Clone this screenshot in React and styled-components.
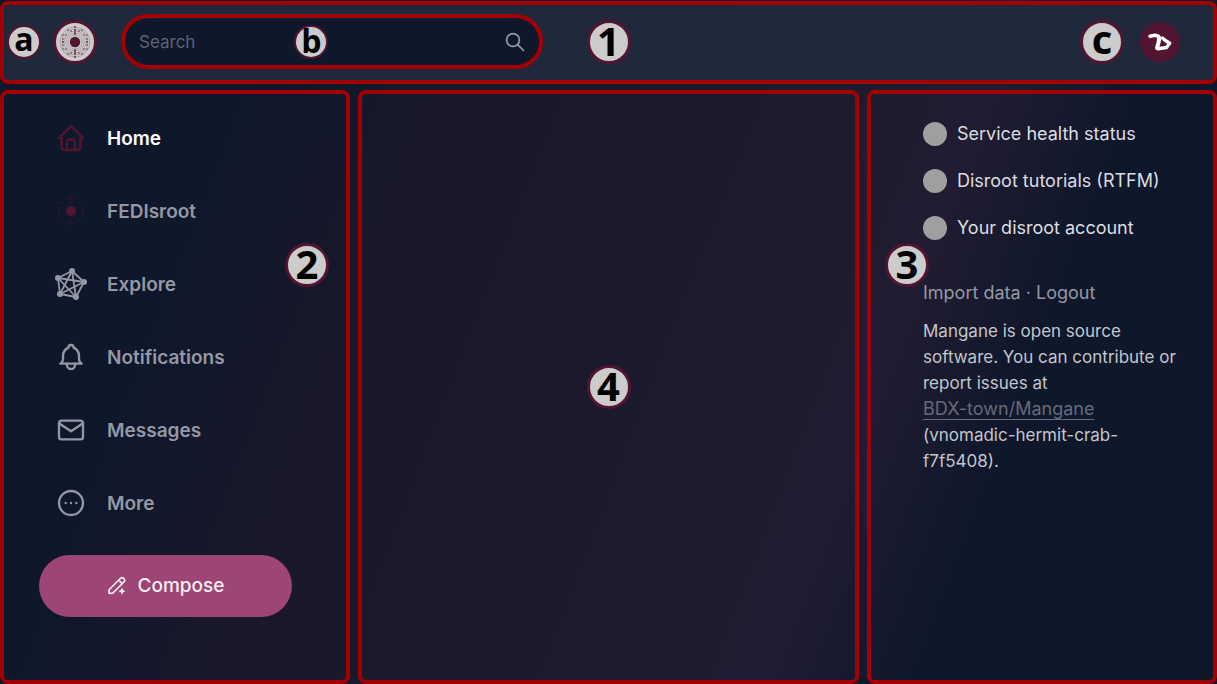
import React from "react";
import styled, { createGlobalStyle } from "styled-components";

const RED = "#a30005";
const WINE = "#53152f";
const MUTED = "#9498a4";

const GlobalStyle = createGlobalStyle`
  *, *::before, *::after { box-sizing: border-box; }
  body {
    margin: 0;
    font-family: Inter, "Liberation Sans", sans-serif;
    background: #0f172a;
  }
`;

const Page = styled.div`
  display: flex;
  flex-direction: column;
  gap: 6px;
  min-height: 100vh;
  padding-top: 1px;
  background: linear-gradient(111deg, #0f172a 0%, #0f172a 19%, #18182a 31%, #1b1a2d 50%, #1e1b2f 62%, #211c31 69%, #0f172a 79%, #0f172a 100%);
`;

const Header = styled.header`
  position: relative;
  display: flex;
  align-items: center;
  height: 83px;
  padding: 0 33px 2px 3px;
  border: 4px solid ${RED};
  border-radius: 8px;
  background: #1f293b;
`;

const Badge = styled.span`
  display: flex;
  align-items: center;
  justify-content: center;
  flex: none;
  width: ${(p) => (p.$small ? 34 : 44)}px;
  height: ${(p) => (p.$small ? 34 : 44)}px;
  padding-bottom: ${(p) => (p.$short ? 6 : 2)}px;
  border: ${(p) => (p.$small ? 2 : 3)}px solid ${WINE};
  border-radius: 50%;
  background: #cccccc;
  color: #000;
  font: 700 ${(p) => (p.$small ? 32 : 40)}px/1 "Open Sans", sans-serif;
`;

const FloatingBadge = styled(Badge)`
  position: absolute;
  left: ${(p) => p.$left};
  top: ${(p) => p.$top};
  transform: translate(-50%, -50%);
  pointer-events: none;
`;

const LogoLink = styled.a`
  flex: none;
  display: block;
  width: 44px;
  height: 44px;
  margin: 0 24px 0 12px;
`;

const SearchForm = styled.form`
  position: relative;
  display: flex;
  align-items: center;
  flex: 0 1 422px;
  min-width: 160px;
  height: 55px;
  padding: 0 12px 0 14px;
  border: 4px solid ${RED};
  border-radius: 28px;
  background: #0f172a;
`;

const SearchInput = styled.input`
  flex: 1;
  min-width: 0;
  padding: 0;
  border: 0;
  outline: 0;
  background: transparent;
  color: #e5e7eb;
  font: 400 17px/24px Inter, sans-serif;
  &::placeholder { color: #5d6473; opacity: 1; }
`;

const IconButton = styled.button`
  display: flex;
  flex: none;
  padding: 0;
  border: 0;
  background: none;
  color: ${MUTED};
`;

const Account = styled.div`
  display: flex;
  align-items: center;
  gap: 16px;
  margin-left: auto;
`;

const Columns = styled.div`
  flex: 1;
  display: grid;
  grid-template-columns: minmax(0, 350fr) minmax(0, 501fr) minmax(0, 350fr);
  gap: 8px;
`;

const Panel = styled.div`
  position: relative;
  border: 4px solid ${RED};
  border-radius: 8px;
`;

const SidePanel = styled(Panel)`
  padding: 28px 54px 28px 35px;
`;

const InfoPanel = styled(Panel)`
  padding: 28px 36px 28px 52px;
`;

const NavList = styled.nav`
  display: flex;
  flex-direction: column;
  gap: 41px;
  padding-left: 16px;
`;

const NavLink = styled.a`
  display: flex;
  align-items: center;
  gap: 20px;
  height: 32px;
  color: ${(p) => (p.$active ? "#ffffff" : MUTED)};
  font-size: 19px;
  font-weight: 600;
  text-decoration: none;
  svg { flex: none; color: ${(p) => (p.$wine ? WINE : MUTED)}; }
`;

const ComposeButton = styled.button`
  display: flex;
  align-items: center;
  justify-content: center;
  gap: 11px;
  width: 100%;
  height: 62px;
  margin-top: 36px;
  border: 0;
  border-radius: 31px;
  background: #9d4574;
  color: #f7eef3;
  font: 500 19px/26px Inter, sans-serif;
`;

const Promos = styled.div`
  display: flex;
  flex-direction: column;
  gap: 23px;
`;

const PromoLink = styled.a`
  display: flex;
  align-items: center;
  gap: 10px;
  height: 24px;
  color: #dcdde1;
  font-size: 18px;
  line-height: 26px;
  text-decoration: none;
  white-space: nowrap;
  &::before {
    content: "";
    flex: none;
    width: 24px;
    height: 24px;
    border-radius: 50%;
    background: #9f9f9f;
  }
`;

const FooterLinks = styled.div`
  margin-top: 40px;
  color: ${MUTED};
  font-size: 18px;
  line-height: 26px;
  a { color: inherit; text-decoration: none; }
`;

const About = styled.p`
  margin: 12px 0 0;
  color: #c3c6cc;
  font-size: 17px;
  line-height: 26px;
`;

const SourceLink = styled.a`
  color: #656b79;
  text-decoration: underline;
  text-underline-offset: 4px;
  text-decoration-thickness: 1px;
  font-size: 18px;
  white-space: nowrap;
`;

function LineIcon({ size = 32, stroke = 1.75, children }) {
  return (
    <svg width={size} height={size} viewBox="0 0 24 24" fill="none" stroke="currentColor"
      strokeWidth={stroke} strokeLinecap="round" strokeLinejoin="round" aria-hidden="true">
      {children}
    </svg>
  );
}

const HomeIcon = () => (
  <LineIcon>
    <path d="M5 12H3l9-9 9 9h-2" />
    <path d="M5 12v7a2 2 0 0 0 2 2h10a2 2 0 0 0 2-2v-7" />
    <path d="M9 21v-6a2 2 0 0 1 2-2h2a2 2 0 0 1 2 2v6" />
  </LineIcon>
);

const BellIcon = () => (
  <LineIcon>
    <path d="M10 5a2 2 0 0 1 4 0a7 7 0 0 1 4 6v3a4 4 0 0 0 2 3H4a4 4 0 0 0 2-3v-3a7 7 0 0 1 4-6" />
    <path d="M9 17v1a3 3 0 0 0 6 0v-1" />
  </LineIcon>
);

const MailIcon = () => (
  <LineIcon>
    <rect x="3" y="5" width="18" height="14" rx="2" />
    <path d="M3 7l9 6 9-6" />
  </LineIcon>
);

const MoreIcon = () => (
  <LineIcon>
    <circle cx="12" cy="12" r="9" />
    <path d="M8 12v.01M12 12v.01M16 12v.01" />
  </LineIcon>
);

const SearchIcon = () => (
  <LineIcon size={24} stroke={1.7}>
    <circle cx="10" cy="10" r="6.400" />
    <path d="M20.500 20.500l-5.800-5.800" />
  </LineIcon>
);

const ComposeIcon = () => (
  <LineIcon size={20} stroke={2}>
    <path d="M2.500 21v-4.500L16 3a2.800 2.800 0 0 1 4.200 4.200L7 20.500z" />
    <path d="M14 5l4.200 4.200" />
    <path d="M18 14l1.400 2.800 2.800 1.400-2.800 1.400L18 22.400l-1.400-2.800-2.800-1.400 2.800-1.400z" fill="currentColor" stroke="none" />
  </LineIcon>
);

const nodes = [[17, 3], [29, 14], [21, 29], [5, 26], [3, 10]];

function FediverseIcon() {
  return (
    <svg width="32" height="32" viewBox="0 0 32 32" aria-hidden="true">
      {nodes.map(([x1, y1], i) =>
        nodes.slice(i + 1).map(([x2, y2]) => (
          <line key={`${x1}-${x2}`} x1={x1} y1={y1} x2={x2} y2={y2} stroke="currentColor" strokeWidth="1.8" />
        ))
      )}
      {nodes.map(([x, y]) => <circle key={x} cx={x} cy={y} r="3" fill="currentColor" />)}
    </svg>
  );
}

const around = (count, r, offset = 0) =>
  Array.from({ length: count }, (_, i) => {
    const a = ((i + offset) / count) * Math.PI * 2;
    return [r * Math.cos(a), r * Math.sin(a)];
  });

function AtomIcon() {
  const dots = [...around(12, 12, 0.5), [0, 9], [0, -9], [0, 12], [0, -12], [0, 15], [0, -15], [12, 0], [-12, 0]];
  return (
    <svg width="32" height="32" viewBox="-16 -16 32 32" aria-hidden="true">
      <circle r="5" fill="currentColor" />
      {dots.map(([x, y], i) => <circle key={i} cx={x} cy={y} r=".8" fill="currentColor" />)}
    </svg>
  );
}

const logoDots = [
  [0, 8], [0, 10], [0, 12], [0, 15], [4, 11], [7, 12], [9, 7], [12, 7], [12, 3], [12, 0],
];

function SiteLogo() {
  return (
    <svg width="44" height="44" viewBox="-22 -22 44 44" aria-hidden="true">
      <circle r="20.500" fill="#cccccc" stroke={WINE} strokeWidth="3" />
      {[7, 9, 11, 13, 15].map((r) => (
        <circle key={r} r={r} fill="none" stroke={WINE} strokeWidth=".4" opacity=".6" />
      ))}
      <circle r="5.200" fill={WINE} />
      {logoDots.flatMap(([x, y]) => [[x, y], [-x, y], [x, -y], [-x, -y]]).map(([x, y], i) => (
        <circle key={i} cx={x} cy={y} r=".7" fill={WINE} />
      ))}
    </svg>
  );
}

function Avatar() {
  return (
    <svg width="40" height="40" viewBox="0 0 40 40" aria-hidden="true">
      <circle cx="20" cy="20" r="20" fill={WINE} />
      <circle cx="20" cy="20" r="16.500" fill="none" stroke="#3d1830" strokeWidth=".8" />
      <g fill="none" stroke="#fff" strokeLinejoin="round" strokeLinecap="round">
        <path d="M10 14.200l5-1 3.500 1 1 3" strokeWidth="3.600" />
        <path d="M19 16l-.3 4-1.700 6" strokeWidth="4" />
        <path d="M22.500 16l2.500 2.200 4.700 3-3.200 4.300-8.500 1.200" strokeWidth="3.400" />
      </g>
    </svg>
  );
}

const navItems = [
  { label: "Home", icon: HomeIcon, active: true, wine: true },
  { label: "FEDIsroot", icon: AtomIcon, wine: true },
  { label: "Explore", icon: FediverseIcon },
  { label: "Notifications", icon: BellIcon },
  { label: "Messages", icon: MailIcon },
  { label: "More", icon: MoreIcon },
];

const promos = ["Service health status", "Disroot tutorials (RTFM)", "Your disroot account"];

export default function App() {
  return (
    <>
      <GlobalStyle />
      <Page>
        <Header>
          <Badge $small $short>a</Badge>
          <LogoLink href="#" aria-label="FEDIsroot"><SiteLogo /></LogoLink>
          <SearchForm role="search">
            <SearchInput type="text" placeholder="Search" aria-label="Search" />
            <IconButton type="button" aria-label="Search"><SearchIcon /></IconButton>
            <FloatingBadge $small $left="45%" $top="50%">b</FloatingBadge>
          </SearchForm>
          <FloatingBadge $left="50%" $top="calc(50% - 1px)">1</FloatingBadge>
          <Account>
            <Badge $short>c</Badge>
            <IconButton type="button" aria-label="Account"><Avatar /></IconButton>
          </Account>
        </Header>
        <Columns>
          <SidePanel>
            <NavList aria-label="Main">
              {navItems.map(({ label, icon: Icon, active, wine }) => (
                <NavLink key={label} href="#" $active={active} $wine={wine}>
                  <Icon />
                  {label}
                </NavLink>
              ))}
            </NavList>
            <ComposeButton type="button"><ComposeIcon />Compose</ComposeButton>
            <FloatingBadge $left="303px" $top="171px">2</FloatingBadge>
          </SidePanel>
          <Panel as="main">
            <FloatingBadge $left="50%" $top="50%">4</FloatingBadge>
          </Panel>
          <InfoPanel as="aside">
            <Promos>
              {promos.map((text) => <PromoLink key={text} href="#">{text}</PromoLink>)}
            </Promos>
            <FooterLinks>
              <a href="#">Import data</a> · <a href="#">Logout</a>
            </FooterLinks>
            <About>
              Mangane is open source software. You can contribute or report issues at{" "}
              <SourceLink href="#">BDX-town/Mangane</SourceLink> (vnomadic-hermit-crab-f7f5408).
            </About>
            <FloatingBadge $left="36px" $top="171px">3</FloatingBadge>
          </InfoPanel>
        </Columns>
      </Page>
    </>
  );
}
